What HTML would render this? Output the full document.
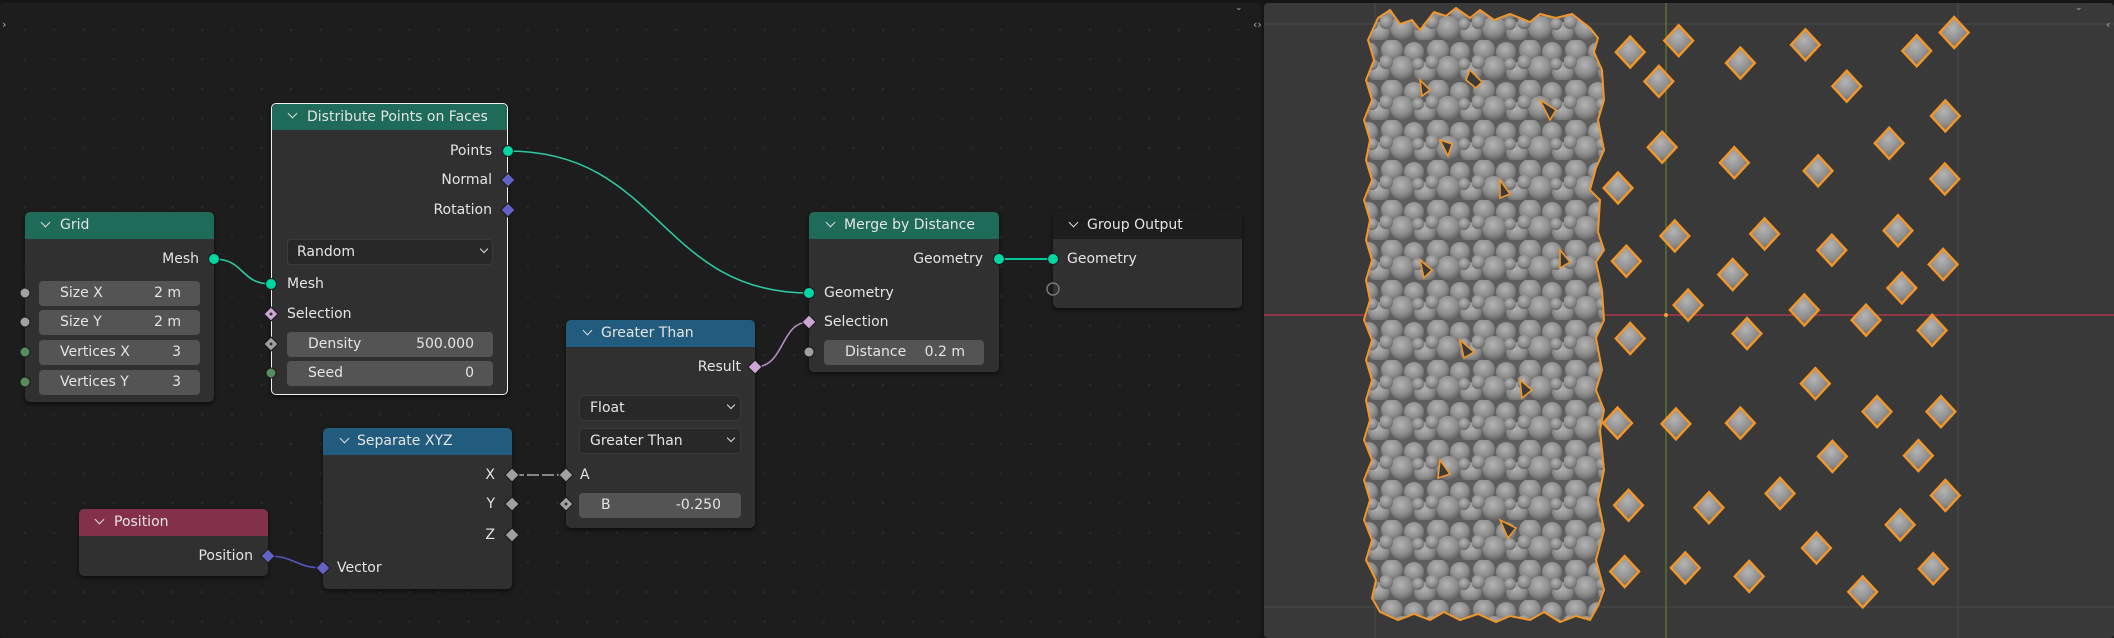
<!DOCTYPE html>
<html><head><meta charset="utf-8"><style>
*{margin:0;padding:0;box-sizing:border-box}
body{width:2114px;height:638px;overflow:hidden;background:#161616;font-family:"DejaVu Sans","Liberation Sans",sans-serif;font-size:14px;color:#e4e4e4;position:relative}
#ne{position:absolute;left:0;top:3px;width:1261px;height:635px;background-color:#1d1d1d;background-image:radial-gradient(circle,#2b2b2b 1.1px,transparent 1.4px);background-size:29.6px 29.6px;background-position:10px 12px;border-radius:4px}
#vp{position:absolute;left:1264px;top:3px;width:850px;height:635px;background:#393939;border-radius:4px;overflow:hidden}
.node{position:absolute;background:#303030;border-radius:5px;box-shadow:0 2px 5px rgba(0,0,0,.6)}
.hd{position:absolute;left:0;top:0;right:0;height:27px;border-radius:5px 5px 0 0}
.t{position:absolute;white-space:nowrap;line-height:16px;transform:translateY(-8px)}
.r{text-align:right}
.fld{position:absolute;background:#545454;border-radius:4px;height:25px}
.dd{position:absolute;background:#282828;border:1px solid #3a3a3a;border-radius:4px;height:26px}
.chev{position:absolute;width:7px;height:7px;border-right:1.5px solid #ddd;border-bottom:1.5px solid #ddd;transform:rotate(45deg)}
</style></head><body>
<div id="ne"></div>
<div id="vp"></div>

<svg style="position:absolute;left:0;top:0" width="2114" height="638">
<defs>
<radialGradient id="dg" cx="0.45" cy="0.35" r="0.7"><stop offset="0" stop-color="#b4b4b4"/><stop offset="0.6" stop-color="#8c8c8c"/><stop offset="1" stop-color="#5c5c5c"/></radialGradient>
<pattern id="cl" width="46" height="40" patternUnits="userSpaceOnUse">
<rect width="46" height="40" fill="#5e5e5e"/>
<circle cx="12" cy="10" r="11" fill="url(#dg)"/>
<circle cx="34" cy="12" r="10" fill="url(#dg)"/>
<circle cx="22" cy="28" r="12" fill="url(#dg)"/>
<circle cx="44" cy="32" r="10" fill="url(#dg)"/>
<circle cx="0" cy="32" r="10" fill="url(#dg)"/>
<circle cx="6" cy="22" r="7" fill="url(#dg)"/>
<circle cx="38" cy="24" r="6" fill="url(#dg)"/>
</pattern>
</defs>
<g stroke-width="1">
<line x1="1375" y1="3" x2="1375" y2="638" stroke="#4a4a4a"/>
<line x1="1958" y1="3" x2="1958" y2="638" stroke="#4a4a4a"/>
<line x1="1264" y1="24" x2="2114" y2="24" stroke="#4a4a4a"/>
<line x1="1264" y1="607" x2="2114" y2="607" stroke="#4a4a4a"/>
<line x1="1666" y1="3" x2="1666" y2="638" stroke="#6a8a2a"/>
<line x1="1264" y1="315" x2="2114" y2="315" stroke="#a8384a" stroke-width="1.4"/>
</g>
<polygon fill="url(#cl)" stroke="#f0962a" stroke-width="2" points="1378,18 1390,10 1400,24 1412,20 1420,30 1434,12 1446,16 1456,8 1470,18 1480,10 1494,20 1510,14 1530,22 1540,14 1556,18 1572,14 1590,28 1598,38 1594,52 1602,70 1604,100 1598,120 1604,150 1596,168 1590,190 1600,200 1598,232 1604,250 1596,262 1602,290 1604,320 1596,338 1602,370 1596,390 1604,410 1600,430 1604,470 1598,500 1604,530 1596,560 1604,590 1598,606 1590,620 1576,616 1560,622 1544,612 1530,620 1510,616 1496,622 1478,614 1460,620 1444,612 1430,620 1414,614 1398,620 1380,612 1372,598 1376,580 1366,560 1372,540 1364,520 1370,500 1364,480 1372,460 1364,440 1370,420 1366,400 1372,380 1366,360 1372,340 1364,320 1370,300 1366,280 1372,260 1366,240 1370,220 1364,200 1372,180 1366,160 1370,140 1364,120 1372,100 1366,80 1374,60 1368,40"/>
<g fill="#3a3a3a" stroke="#f0962a" stroke-width="1.6">
<path d="M1420,80 l10,10 -8,6z M1470,70 l12,12 -6,6 -10,-8z M1540,100 l16,10 -6,10z M1440,140 l12,4 -4,12z M1500,180 l10,14 -10,4z M1420,260 l12,10 -8,8z M1560,250 l10,12 -10,6z M1460,340 l14,12 -10,6z M1520,380 l12,10 -10,8z M1440,460 l10,14 -12,4z M1500,520 l16,8 -8,10z"/>
</g>
<g transform="translate(1250,0) scale(0.551,0.4068)">
<g fill="url(#dg)" stroke="#f0962a" stroke-width="2.5">
<polygon points="690,90 716,128 690,166 664,128" vector-effect="non-scaling-stroke"/>
<polygon points="778,62 804,100 778,138 752,100" vector-effect="non-scaling-stroke"/>
<polygon points="890,117 916,155 890,193 864,155" vector-effect="non-scaling-stroke"/>
<polygon points="1008,72 1034,110 1008,148 982,110" vector-effect="non-scaling-stroke"/>
<polygon points="1210,87 1236,125 1210,163 1184,125" vector-effect="non-scaling-stroke"/>
<polygon points="1278,42 1304,80 1278,118 1252,80" vector-effect="non-scaling-stroke"/>
<polygon points="742,162 768,200 742,238 716,200" vector-effect="non-scaling-stroke"/>
<polygon points="1083,174 1109,212 1083,250 1057,212" vector-effect="non-scaling-stroke"/>
<polygon points="1262,247 1288,285 1262,323 1236,285" vector-effect="non-scaling-stroke"/>
<polygon points="1160,314 1186,352 1160,390 1134,352" vector-effect="non-scaling-stroke"/>
<polygon points="748,324 774,362 748,400 722,362" vector-effect="non-scaling-stroke"/>
<polygon points="879,362 905,400 879,438 853,400" vector-effect="non-scaling-stroke"/>
<polygon points="1031,382 1057,420 1031,458 1005,420" vector-effect="non-scaling-stroke"/>
<polygon points="1261,402 1287,440 1261,478 1235,440" vector-effect="non-scaling-stroke"/>
<polygon points="668,424 694,462 668,500 642,462" vector-effect="non-scaling-stroke"/>
<polygon points="771,542 797,580 771,618 745,580" vector-effect="non-scaling-stroke"/>
<polygon points="934,537 960,575 934,613 908,575" vector-effect="non-scaling-stroke"/>
<polygon points="1056,577 1082,615 1056,653 1030,615" vector-effect="non-scaling-stroke"/>
<polygon points="1176,529 1202,567 1176,605 1150,567" vector-effect="non-scaling-stroke"/>
<polygon points="683,604 709,642 683,680 657,642" vector-effect="non-scaling-stroke"/>
<polygon points="1258,612 1284,650 1258,688 1232,650" vector-effect="non-scaling-stroke"/>
<polygon points="876,637 902,675 876,713 850,675" vector-effect="non-scaling-stroke"/>
<polygon points="1183,670 1209,708 1183,746 1157,708" vector-effect="non-scaling-stroke"/>
<polygon points="795,712 821,750 795,788 769,750" vector-effect="non-scaling-stroke"/>
<polygon points="1006,724 1032,762 1006,800 980,762" vector-effect="non-scaling-stroke"/>
<polygon points="1118,749 1144,787 1118,825 1092,787" vector-effect="non-scaling-stroke"/>
<polygon points="1238,774 1264,812 1238,850 1212,812" vector-effect="non-scaling-stroke"/>
<polygon points="690,794 716,832 690,870 664,832" vector-effect="non-scaling-stroke"/>
<polygon points="902,782 928,820 902,858 876,820" vector-effect="non-scaling-stroke"/>
<polygon points="1026,905 1052,943 1026,981 1000,943" vector-effect="non-scaling-stroke"/>
<polygon points="1138,974 1164,1012 1138,1050 1112,1012" vector-effect="non-scaling-stroke"/>
<polygon points="1254,974 1280,1012 1254,1050 1228,1012" vector-effect="non-scaling-stroke"/>
<polygon points="667,1002 693,1040 667,1078 641,1040" vector-effect="non-scaling-stroke"/>
<polygon points="773,1004 799,1042 773,1080 747,1042" vector-effect="non-scaling-stroke"/>
<polygon points="890,1002 916,1040 890,1078 864,1040" vector-effect="non-scaling-stroke"/>
<polygon points="1057,1084 1083,1122 1057,1160 1031,1122" vector-effect="non-scaling-stroke"/>
<polygon points="1213,1082 1239,1120 1213,1158 1187,1120" vector-effect="non-scaling-stroke"/>
<polygon points="962,1175 988,1213 962,1251 936,1213" vector-effect="non-scaling-stroke"/>
<polygon points="1262,1180 1288,1218 1262,1256 1236,1218" vector-effect="non-scaling-stroke"/>
<polygon points="687,1204 713,1242 687,1280 661,1242" vector-effect="non-scaling-stroke"/>
<polygon points="833,1210 859,1248 833,1286 807,1248" vector-effect="non-scaling-stroke"/>
<polygon points="1180,1252 1206,1290 1180,1328 1154,1290" vector-effect="non-scaling-stroke"/>
<polygon points="1028,1309 1054,1347 1028,1385 1002,1347" vector-effect="non-scaling-stroke"/>
<polygon points="680,1367 706,1405 680,1443 654,1405" vector-effect="non-scaling-stroke"/>
<polygon points="790,1358 816,1396 790,1434 764,1396" vector-effect="non-scaling-stroke"/>
<polygon points="906,1379 932,1417 906,1455 880,1417" vector-effect="non-scaling-stroke"/>
<polygon points="1112,1417 1138,1455 1112,1493 1086,1455" vector-effect="non-scaling-stroke"/>
<polygon points="1240,1360 1266,1398 1240,1436 1214,1398" vector-effect="non-scaling-stroke"/>
</g></g>
<circle cx="1666" cy="315" r="2" fill="#f0a030"/>
<text x="1253" y="28" fill="#aaa" font-size="11" font-family="DejaVu Sans">‹›</text>
<text x="2106" y="28" fill="#aaa" font-size="11" font-family="DejaVu Sans">‹</text>
<text x="2" y="28" fill="#aaa" font-size="11" font-family="DejaVu Sans">›</text>
<text x="1235" y="10" fill="#aaa" font-size="9" font-family="DejaVu Sans">⌄</text>
<text x="2075" y="10" fill="#aaa" font-size="9" font-family="DejaVu Sans">⌄</text>
</svg>

<!-- Grid -->
<div class="node" style="left:25px;top:212px;width:189px;height:190px"><div class="hd" style="background:#1f6b59"></div></div>
<div class="chev" style="left:42px;top:219px"></div><div class="t" style="left:60px;top:225px">Grid</div>
<div class="t r" style="left:100px;width:99px;top:259px">Mesh</div>
<div class="fld" style="left:39px;top:281px;width:161px"></div><div class="t" style="left:60px;top:293px">Size X</div><div class="t r" style="left:140px;width:41px;top:293px">2 m</div>
<div class="fld" style="left:39px;top:310px;width:161px"></div><div class="t" style="left:60px;top:322px">Size Y</div><div class="t r" style="left:140px;width:41px;top:322px">2 m</div>
<div class="fld" style="left:39px;top:340px;width:161px"></div><div class="t" style="left:60px;top:352px">Vertices X</div><div class="t r" style="left:140px;width:41px;top:352px">3</div>
<div class="fld" style="left:39px;top:370px;width:161px"></div><div class="t" style="left:60px;top:382px">Vertices Y</div><div class="t r" style="left:140px;width:41px;top:382px">3</div>

<!-- Distribute -->
<div class="node" style="left:271px;top:103px;width:237px;height:292px;border:1.5px solid #f0f0f0"><div class="hd" style="background:#1f6b59;top:0;height:26px"></div></div>
<div class="chev" style="left:289px;top:110px"></div><div class="t" style="left:307px;top:117px">Distribute Points on Faces</div>
<div class="t r" style="left:380px;width:112px;top:151px">Points</div>
<div class="t r" style="left:380px;width:112px;top:180px">Normal</div>
<div class="t r" style="left:380px;width:112px;top:210px">Rotation</div>
<div class="dd" style="left:287px;top:239px;width:206px"></div><div class="t" style="left:297px;top:252px">Random</div><div class="chev" style="left:481px;top:246px;width:6px;height:6px"></div>
<div class="t" style="left:287px;top:284px">Mesh</div>
<div class="t" style="left:287px;top:314px">Selection</div>
<div class="fld" style="left:287px;top:332px;width:206px"></div><div class="t" style="left:308px;top:344px">Density</div><div class="t r" style="left:380px;width:94px;top:344px">500.000</div>
<div class="fld" style="left:287px;top:361px;width:206px"></div><div class="t" style="left:308px;top:373px">Seed</div><div class="t r" style="left:380px;width:94px;top:373px">0</div>

<!-- Greater Than -->
<div class="node" style="left:566px;top:320px;width:189px;height:208px"><div class="hd" style="background:#215c7e"></div></div>
<div class="chev" style="left:584px;top:327px"></div><div class="t" style="left:601px;top:333px">Greater Than</div>
<div class="t r" style="left:640px;width:101px;top:367px">Result</div>
<div class="dd" style="left:579px;top:395px;width:162px"></div><div class="t" style="left:590px;top:408px">Float</div><div class="chev" style="left:728px;top:402px;width:6px;height:6px"></div>
<div class="dd" style="left:579px;top:428px;width:162px"></div><div class="t" style="left:590px;top:441px">Greater Than</div><div class="chev" style="left:728px;top:435px;width:6px;height:6px"></div>
<div class="t" style="left:580px;top:475px">A</div>
<div class="fld" style="left:579px;top:493px;width:162px"></div><div class="t" style="left:601px;top:505px">B</div><div class="t r" style="left:650px;width:71px;top:505px">-0.250</div>

<!-- Separate XYZ -->
<div class="node" style="left:323px;top:428px;width:189px;height:161px"><div class="hd" style="background:#215c7e"></div></div>
<div class="chev" style="left:341px;top:435px"></div><div class="t" style="left:357px;top:441px">Separate XYZ</div>
<div class="t r" style="left:450px;width:45px;top:475px">X</div>
<div class="t r" style="left:450px;width:45px;top:504px">Y</div>
<div class="t r" style="left:450px;width:45px;top:535px">Z</div>
<div class="t" style="left:337px;top:568px">Vector</div>

<!-- Position -->
<div class="node" style="left:79px;top:509px;width:189px;height:67px"><div class="hd" style="background:#83304a"></div></div>
<div class="chev" style="left:96px;top:516px"></div><div class="t" style="left:114px;top:522px">Position</div>
<div class="t r" style="left:150px;width:103px;top:556px">Position</div>

<!-- Merge -->
<div class="node" style="left:809px;top:212px;width:190px;height:160px"><div class="hd" style="background:#1f6b59"></div></div>
<div class="chev" style="left:827px;top:219px"></div><div class="t" style="left:844px;top:225px">Merge by Distance</div>
<div class="t r" style="left:880px;width:103px;top:259px">Geometry</div>
<div class="t" style="left:824px;top:293px">Geometry</div>
<div class="t" style="left:824px;top:322px">Selection</div>
<div class="fld" style="left:824px;top:340px;width:160px"></div><div class="t" style="left:845px;top:352px">Distance</div><div class="t r" style="left:900px;width:65px;top:352px">0.2 m</div>

<!-- Group Output -->
<div class="node" style="left:1053px;top:212px;width:189px;height:96px"><div class="hd" style="background:#1d1d1d"></div></div>
<div class="chev" style="left:1070px;top:219px"></div><div class="t" style="left:1087px;top:225px">Group Output</div>
<div class="t" style="left:1067px;top:259px">Geometry</div>

<svg style="position:absolute;left:0;top:0" width="1262" height="638">
<g fill="none" stroke-width="1.6">
<path d="M214,259 C245,259 240,284 271,284" stroke="#2fc9a0"/>
<path d="M508,151 C660,151 660,293 809,293" stroke="#2fc9a0"/>
<path d="M755,367 C785,367 780,322 809,322" stroke="#b48cc4"/>
<path d="M999,259 L1053,259" stroke="#00c99a" stroke-width="2"/>
<path d="M512,475 L566,475" stroke="#aaa" stroke-dasharray="12,3"/>
<path d="M268,556 C295,556 296,568 323,568" stroke="#5656c0"/>
</g>
<g stroke="#1a1a1a" stroke-width="1">
<circle cx="214" cy="259" r="5.5" fill="#00d6a3"/>
<circle cx="25" cy="293" r="5" fill="#a1a1a1"/><circle cx="25" cy="322" r="5" fill="#a1a1a1"/>
<circle cx="25" cy="352" r="5" fill="#598c5c"/><circle cx="25" cy="382" r="5" fill="#598c5c"/>
<circle cx="508" cy="151" r="5.5" fill="#00d6a3"/>
<polygon points="508,173 515,180 508,187 501,180" fill="#6363c7"/>
<polygon points="508,203 515,210 508,217 501,210" fill="#6363c7"/>
<circle cx="271" cy="284" r="5.5" fill="#00d6a3"/>
<polygon points="271,307 278,314 271,321 264,314" fill="#cca6d6"/><circle cx="271" cy="314" r="1.5" fill="#303030" stroke="none"/>
<polygon points="271,337 278,344 271,351 264,344" fill="#a1a1a1"/><circle cx="271" cy="344" r="1.5" fill="#303030" stroke="none"/>
<circle cx="271" cy="373" r="5" fill="#598c5c"/>
<polygon points="755,360 762,367 755,374 748,367" fill="#cca6d6"/>
<polygon points="566,468 573,475 566,482 559,475" fill="#a1a1a1"/>
<polygon points="566,497 573,504 566,511 559,504" fill="#a1a1a1"/><circle cx="566" cy="504" r="1.5" fill="#303030" stroke="none"/>
<polygon points="512,468 519,475 512,482 505,475" fill="#a1a1a1"/>
<polygon points="512,497 519,504 512,511 505,504" fill="#a1a1a1"/>
<polygon points="512,528 519,535 512,542 505,535" fill="#a1a1a1"/>
<polygon points="323,561 330,568 323,575 316,568" fill="#6363c7"/>
<polygon points="268,549 275,556 268,563 261,556" fill="#6363c7"/>
<circle cx="999" cy="259" r="5.5" fill="#00d6a3"/>
<circle cx="809" cy="293" r="5.5" fill="#00d6a3"/>
<polygon points="809,315 816,322 809,329 802,322" fill="#cca6d6"/>
<circle cx="809" cy="352" r="5" fill="#a1a1a1"/>
<circle cx="1053" cy="259" r="5.5" fill="#00d6a3"/>
<circle cx="1053" cy="289" r="6" fill="none" stroke="#777" stroke-width="1.5"/>
</g>
</svg>
</body></html>
